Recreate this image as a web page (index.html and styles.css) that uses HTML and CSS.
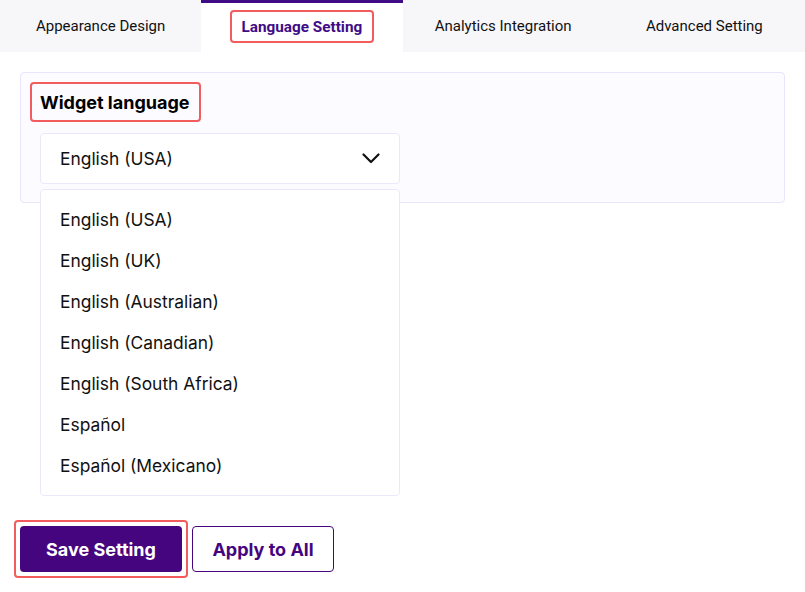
FILE: index.html
```html
<!DOCTYPE html>
<html>
<head>
<meta charset="utf-8">
<link rel="stylesheet" href="styles.css">
</head>
<body>
<div class="tabs">
  <div class="tab">Appearance Design</div>
  <div class="tab active"><span class="hl">Language Setting</span></div>
  <div class="tab">Analytics Integration</div>
  <div class="tab">Advanced Setting</div>
</div>
<div class="panel">
  <div class="label">Widget language</div>
  <div class="select-wrap">
    <div class="select">
      <span>English (USA)</span>
      <svg class="chev" width="18" height="11" viewBox="0 0 18 11"><path d="M1.5 1.5 L9 9 L16.5 1.5" fill="none" stroke="#111" stroke-width="2.2" stroke-linecap="round" stroke-linejoin="round"/></svg>
    </div>
    <ul class="menu">
      <li>English (USA)</li>
      <li>English (UK)</li>
      <li>English (Australian)</li>
      <li>English (Canadian)</li>
      <li>English (South Africa)</li>
      <li>Español</li>
      <li>Español (Mexicano)</li>
    </ul>
  </div>
</div>
<div class="actions">
  <div class="save-hl"><button class="btn primary">Save Setting</button></div>
  <button class="btn outline">Apply to All</button>
</div>
</body>
</html>
```
FILE: styles.css
```css
* { box-sizing: border-box; }
body {
  margin: 0;
  font-family: Inter, "Noto Sans", sans-serif;
  color: #111;
  background: #fff;
}
.tabs {
  display: grid;
  grid-template-columns: repeat(4, 1fr);
  height: 52px;
  background: #f7f7fa;
}
.tab {
  display: flex;
  align-items: center;
  justify-content: center;
  font-family: Roboto, sans-serif;
  font-size: 15px;
  color: #111;
}
.tab.active {
  background: #fff;
  border-top: 3px solid #3f0c86;
  padding-bottom: 2px;
}
.hl {
  display: inline-flex;
  align-items: center;
  height: 33px;
  padding: 0 10px;
  border: 2px solid #f25c5c;
  border-radius: 4px;
  color: #3f0c86;
  font-weight: 700;
  font-size: 15.3px;
}
.panel {
  margin: 20px 20px 0;
  padding: 9px 9px 18px;
  background: #fcfbff;
  border: 1px solid #e9e5fb;
  border-radius: 4px;
}
.label {
  display: inline-flex;
  align-items: center;
  height: 40px;
  padding: 0 9px 0 8px;
  border: 2px solid #f25c5c;
  border-radius: 4px;
  font-size: 18px;
  font-weight: 700;
  color: #000;
}
.select-wrap {
  position: relative;
  width: 360px;
  margin: 11px 0 0 10px;
}
.select {
  display: flex;
  align-items: center;
  justify-content: space-between;
  height: 51px;
  padding: 0 19px;
  background: #fff;
  border: 1px solid #ece8fb;
  border-radius: 4px;
  font-size: 17.4px;
}
.menu {
  position: absolute;
  left: 0;
  top: 56px;
  width: 360px;
  margin: 0;
  padding: 9px 0;
  list-style: none;
  background: #fff;
  border: 1px solid #ece8fb;
  border-radius: 4px;
  z-index: 2;
}
.menu li {
  height: 41px;
  display: flex;
  align-items: center;
  padding: 0 19px;
  font-size: 17.4px;
  color: #111;
}
.actions {
  display: flex;
  align-items: center;
  gap: 4px;
  margin: 317px 0 0 14px;
}
.save-hl {
  padding: 4px;
  border: 2px solid #f25c5c;
  border-radius: 4px;
}
.btn {
  height: 46px;
  font-family: Inter, sans-serif;
  font-size: 18px;
  font-weight: 700;
  border-radius: 4px;
  cursor: pointer;
}
.primary {
  width: 162px;
  background: #45057f;
  color: #fff;
  border: none;
}
.outline {
  width: 142px;
  background: #fff;
  color: #45057f;
  border: 1px solid #45057f;
}
```
